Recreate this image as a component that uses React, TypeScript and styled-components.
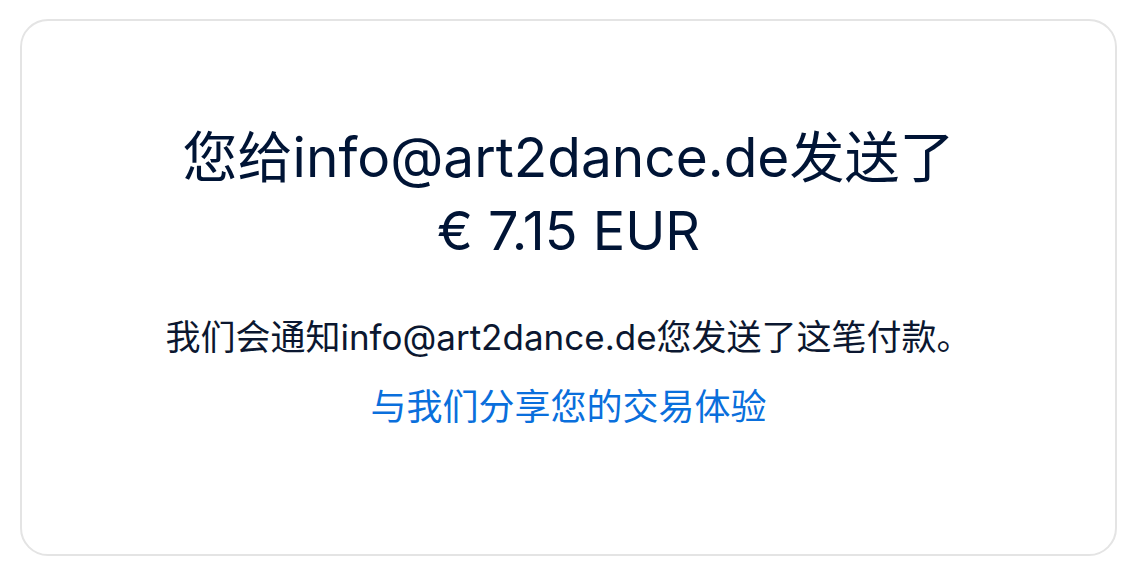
import React from 'react'
import styled, { createGlobalStyle } from 'styled-components'

const GlobalStyle = createGlobalStyle`
  html, body {
    margin: 0;
    padding: 0;
    background: #ffffff;
  }
  body {
    font-family: Inter, 'Noto Sans CJK SC', sans-serif;
  }
`

const Page = styled.div`
  padding: 19px 14px 21px 20px;
`

const Card = styled.section`
  box-sizing: border-box;
  height: 537px;
  border: 2px solid #e4e4e4;
  border-radius: 28px;
  display: flex;
  flex-direction: column;
  align-items: center;
  padding-top: 99px;
`

const Title = styled.h1`
  margin: 0;
  font-size: 55px;
  font-weight: 400;
  line-height: 74px;
  color: #001435;
  text-align: center;
`

const Amount = styled.span`
  display: block;
  font-size: 54px;
`

const Message = styled.p`
  margin: 44px 0 0;
  font-size: 35px;
  line-height: 50px;
  color: #0b1730;
  text-align: center;
`

const FeedbackLink = styled.a`
  margin-top: 20px;
  font-size: 36px;
  line-height: 50px;
  color: #0a6fdc;
  text-decoration: none;
  cursor: pointer;
`

export default function App() {
  return (
    <>
      <GlobalStyle />
      <Page>
        <Card>
          <Title>
            您给info@art2dance.de发送了
            <Amount>€ 7.15 EUR</Amount>
          </Title>
          <Message>我们会通知info@art2dance.de您发送了这笔付款。</Message>
          <FeedbackLink>与我们分享您的交易体验</FeedbackLink>
        </Card>
      </Page>
    </>
  )
}
